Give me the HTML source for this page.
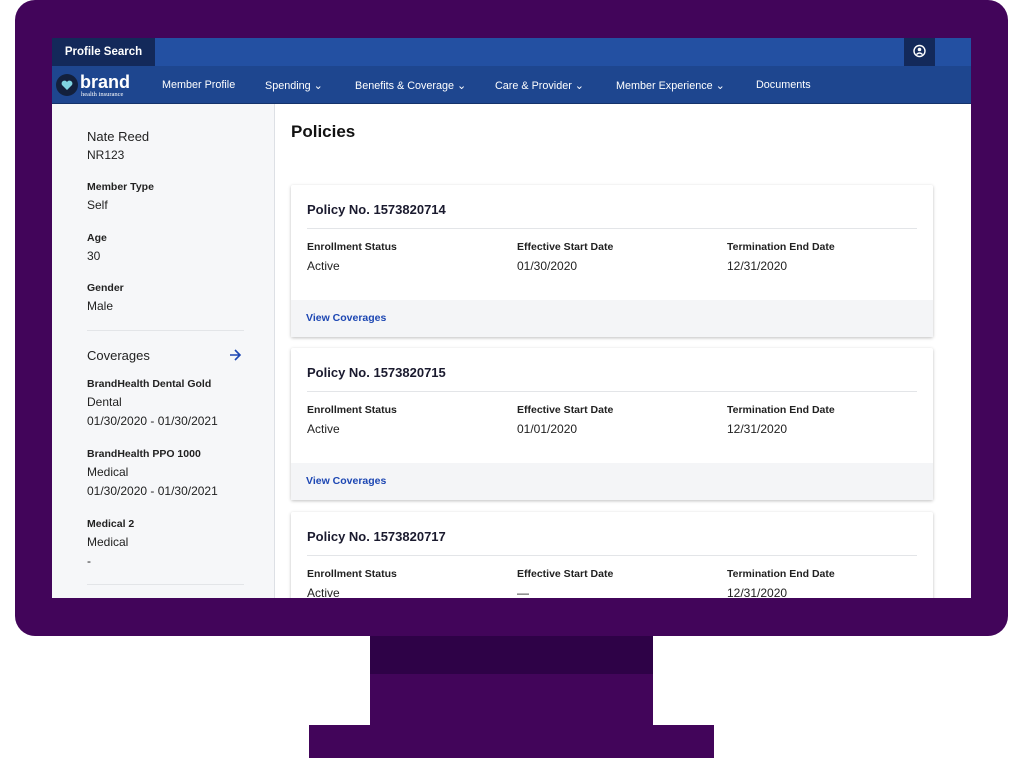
<!DOCTYPE html>
<html><head><style>
*{margin:0;padding:0;box-sizing:border-box}
body{width:1024px;height:758px;background:#fff;position:relative;overflow:hidden;font-family:"Liberation Sans",sans-serif;color:#1a1a2e}
.frame{position:absolute;left:15px;top:0;width:993px;height:636px;background:#42055a;border-radius:20px}
.neck1{position:absolute;left:370px;top:636px;width:283px;height:38px;background:#2e0247}
.neck2{position:absolute;left:370px;top:674px;width:283px;height:51px;background:#42055a}
.base{position:absolute;left:309px;top:725px;width:405px;height:33px;background:#42055a}
.screen{position:absolute;left:52px;top:38px;width:919px;height:560px;background:#fff;overflow:hidden}
.top{height:28px;background:#2350a2;position:relative}
.ps{position:absolute;left:0;top:0;width:103px;height:28px;background:#13295a;color:#fff;font-size:11.5px;font-weight:bold;line-height:28px;text-align:center}
.usr{position:absolute;left:852px;top:0;width:31px;height:28px;background:#13295a}
.nav{height:38px;background:#1e468f;position:relative;color:#fff;font-size:10.8px;border-bottom:1px solid #15336b}
.nav span{position:absolute;top:13px}
.logo{position:absolute;left:4px;top:6px}
.side{position:absolute;left:0;top:66px;width:223px;height:494px;background:#f6f7f9;border-right:1px solid #dde0e5}
.t{position:absolute;font-size:12px;color:#222}
.b{font-weight:bold;font-size:10.5px}
.card{position:absolute;left:239px;width:642px;height:152px;background:#fff;box-shadow:0 1px 3px rgba(0,0,0,.25);border-radius:2px}
.card h3{position:absolute;left:16px;top:17px;font-size:13px;font-weight:bold}
.card .hr{position:absolute;left:16px;right:16px;top:43px;height:1px;background:#e3e5e8}
.card .f{position:absolute;left:0;right:0;bottom:0;height:37px;background:#f4f5f7}
.card .f span{position:absolute;left:15px;top:12px;font-size:10.5px;font-weight:bold;color:#1d47b3}
</style></head><body>
<div class="frame"></div><div class="neck1"></div><div class="neck2"></div><div class="base"></div>
<div class="screen">
<div class="top"><div class="ps">Profile Search</div><div class="usr"><svg width="31" height="28"><circle cx="15.5" cy="13" r="5.5" fill="none" stroke="#fff" stroke-width="1.4"/><circle cx="15.5" cy="11.5" r="1.8" fill="#fff"/><path d="M12.5 16.5q3-3 6 0" stroke="#fff" stroke-width="1.3" fill="none"/></svg></div></div>
<div class="nav">
<div class="logo"><svg width="80" height="28"><circle cx="11" cy="13" r="11" fill="#13203c"/><path d="M11 18l-5-5a2.6 2.6 0 015-3 2.6 2.6 0 015 3z" fill="#7fd3e0"/><text x="24" y="16" font-family="Liberation Sans" font-weight="bold" font-size="18" fill="#fff">brand</text><text x="25" y="24" font-family="Liberation Serif" font-size="6.5" fill="#fff">health insurance</text></svg></div>
<span style="left:110px">Member Profile</span>
<span style="left:213px">Spending ⌄</span>
<span style="left:303px">Benefits &amp; Coverage ⌄</span>
<span style="left:443px">Care &amp; Provider ⌄</span>
<span style="left:564px">Member Experience ⌄</span>
<span style="left:704px">Documents</span>
</div>
<div class="side">
<div class="t" style="left:35px;top:25px;font-size:13px">Nate Reed</div>
<div class="t" style="left:35px;top:44px">NR123</div>
<div class="t b" style="left:35px;top:77px">Member Type</div>
<div class="t" style="left:35px;top:94px">Self</div>
<div class="t b" style="left:35px;top:128px">Age</div>
<div class="t" style="left:35px;top:145px">30</div>
<div class="t b" style="left:35px;top:178px">Gender</div>
<div class="t" style="left:35px;top:195px">Male</div>
<div style="position:absolute;left:35px;top:226px;width:157px;height:1px;background:#e3e5e8"></div>
<div class="t" style="left:35px;top:244px;font-size:13px">Coverages</div>
<svg style="position:absolute;left:176px;top:244px" width="14" height="14"><path d="M2 7h10M7 2l5 5-5 5" stroke="#1d47b3" stroke-width="1.6" fill="none"/></svg>
<div class="t b" style="left:35px;top:274px">BrandHealth Dental Gold</div>
<div class="t" style="left:35px;top:291px">Dental</div>
<div class="t" style="left:35px;top:310px">01/30/2020 - 01/30/2021</div>
<div class="t b" style="left:35px;top:344px">BrandHealth PPO 1000</div>
<div class="t" style="left:35px;top:361px">Medical</div>
<div class="t" style="left:35px;top:380px">01/30/2020 - 01/30/2021</div>
<div class="t b" style="left:35px;top:414px">Medical 2</div>
<div class="t" style="left:35px;top:431px">Medical</div>
<div class="t" style="left:35px;top:450px">-</div>
<div style="position:absolute;left:35px;top:480px;width:157px;height:1px;background:#e3e5e8"></div>
</div>
<div class="t" style="left:239px;top:84px;font-size:17px;font-weight:bold;color:#111">Policies</div>

<div class="card" style="top:147px"><h3>Policy No. 1573820714</h3><div class="hr"></div>
<div class="t b" style="left:16px;top:56px">Enrollment Status</div><div class="t" style="left:16px;top:74px">Active</div>
<div class="t b" style="left:226px;top:56px">Effective Start Date</div><div class="t" style="left:226px;top:74px">01/30/2020</div>
<div class="t b" style="left:436px;top:56px">Termination End Date</div><div class="t" style="left:436px;top:74px">12/31/2020</div>
<div class="f"><span>View Coverages</span></div></div>

<div class="card" style="top:310px"><h3>Policy No. 1573820715</h3><div class="hr"></div>
<div class="t b" style="left:16px;top:56px">Enrollment Status</div><div class="t" style="left:16px;top:74px">Active</div>
<div class="t b" style="left:226px;top:56px">Effective Start Date</div><div class="t" style="left:226px;top:74px">01/01/2020</div>
<div class="t b" style="left:436px;top:56px">Termination End Date</div><div class="t" style="left:436px;top:74px">12/31/2020</div>
<div class="f"><span>View Coverages</span></div></div>

<div class="card" style="top:474px"><h3>Policy No. 1573820717</h3><div class="hr"></div>
<div class="t b" style="left:16px;top:56px">Enrollment Status</div><div class="t" style="left:16px;top:74px">Active</div>
<div class="t b" style="left:226px;top:56px">Effective Start Date</div><div class="t" style="left:226px;top:74px">—</div>
<div class="t b" style="left:436px;top:56px">Termination End Date</div><div class="t" style="left:436px;top:74px">12/31/2020</div>
</div>
</div>
</body></html>
